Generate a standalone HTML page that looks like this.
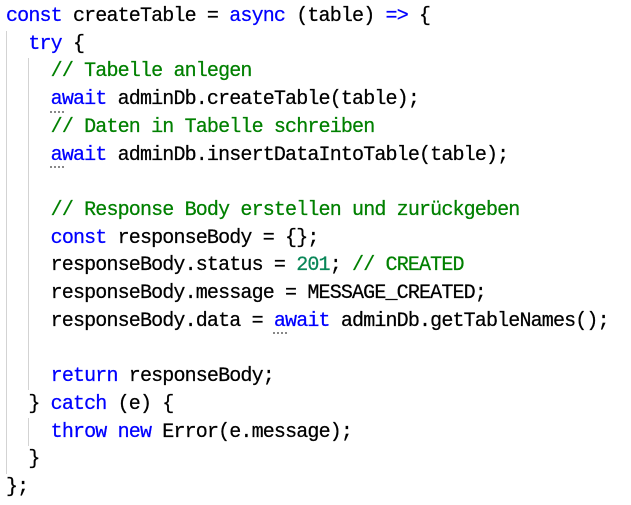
<!DOCTYPE html>
<html><head><style>
body{margin:0;background:#fff;width:631px;height:505px;overflow:hidden;position:relative}
pre{margin:0;position:absolute;left:6px;top:3px;font-family:"Liberation Mono",monospace;font-size:20px;letter-spacing:-0.84px;line-height:27.7px;color:#000;-webkit-text-stroke:0.25px}
.k{color:#0000ff}.c{color:#008000}.n{color:#098658}
.g{position:absolute;width:1px;background:#d3d3d3}
.d{position:absolute;width:14px;height:2px;border-top:2px dotted #888}
</style></head><body>
<div class="g" style="left:6px;top:31px;height:443px"></div>
<div class="g" style="left:28px;top:58px;height:332px"></div>
<div class="g" style="left:28px;top:418px;height:28px"></div>
<div class="d" style="left:50px;top:111px"></div>
<div class="d" style="left:50px;top:166px"></div>
<div class="d" style="left:273px;top:332px"></div>
<pre><span class="k">const</span> createTable = <span class="k">async</span> (table) <span class="k">=&gt;</span> {
  <span class="k">try</span> {
    <span class="c">// Tabelle anlegen</span>
    <span class="k">await</span> adminDb.createTable(table);
    <span class="c">// Daten in Tabelle schreiben</span>
    <span class="k">await</span> adminDb.insertDataIntoTable(table);

    <span class="c">// Response Body erstellen und zurückgeben</span>
    <span class="k">const</span> responseBody = {};
    responseBody.status = <span class="n">201</span>; <span class="c">// CREATED</span>
    responseBody.message = MESSAGE_CREATED;
    responseBody.data = <span class="k">await</span> adminDb.getTableNames();

    <span class="k">return</span> responseBody;
  } <span class="k">catch</span> (e) {
    <span class="k">throw</span> <span class="k">new</span> Error(e.message);
  }
};</pre>
</body></html>
